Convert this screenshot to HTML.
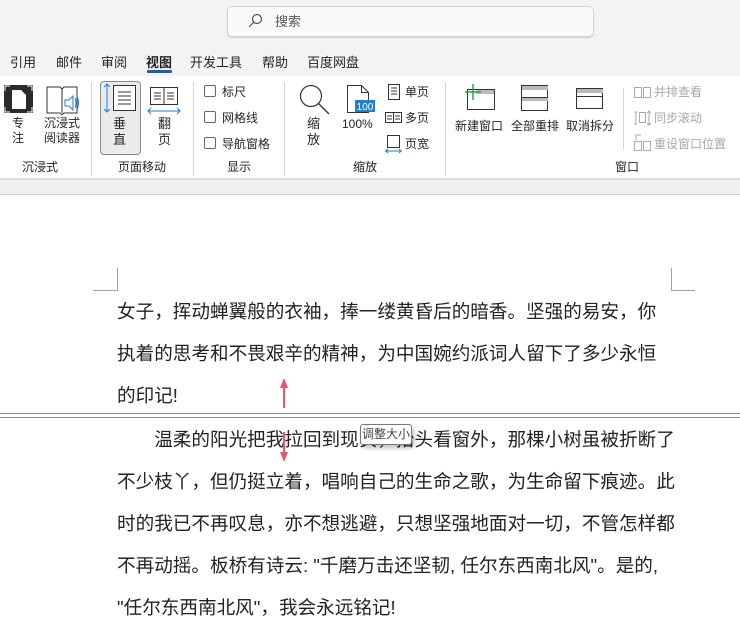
<!DOCTYPE html><html><head><meta charset="utf-8"><style>
*{margin:0;padding:0;box-sizing:border-box}
body{width:740px;height:644px;overflow:hidden;background:#fff;font-family:"Liberation Sans","Noto Sans CJK SC",sans-serif;color:#242424;position:relative}
.a{position:absolute;white-space:nowrap}
.t{font-size:13px}
.s{font-size:12px}
.g{color:#a8a8a8}
.sep{position:absolute;width:1px;background:#d6d6d6;top:82px;height:94px}
.doc{font-size:18.6px;line-height:42px;color:#222}
.cb{position:absolute;width:12px;height:12px;border:1px solid #666;border-radius:2px;left:204px}
</style></head><body>
<div class="a" style="left:0;top:0;width:740px;height:76px;background:#f3f3f3"></div>
<div class="a" style="left:227px;top:6px;width:367px;height:31px;background:#fafafa;border:1px solid #d4d4d4;border-radius:5px;box-shadow:0 1px 1px #ccc"></div>
<svg class="a" style="left:247px;top:13px" width="16" height="16"><circle cx="10" cy="6" r="4.5" fill="none" stroke="#555" stroke-width="1.2"/><line x1="6.8" y1="9.2" x2="2" y2="14" stroke="#555" stroke-width="1.2"/></svg>
<div class="a t" style="left:275px;top:11px;color:#555">搜索</div>
<div class="a t" style="left:10px;top:52px">引用</div>
<div class="a t" style="left:56px;top:52px">邮件</div>
<div class="a t" style="left:101px;top:52px">审阅</div>
<div class="a t" style="left:146px;top:52px;font-weight:bold">视图</div>
<div class="a" style="left:147px;top:70px;width:25px;height:3px;background:#1d5fb4;border-radius:1px"></div>
<div class="a t" style="left:190px;top:52px">开发工具</div>
<div class="a t" style="left:262px;top:52px">帮助</div>
<div class="a t" style="left:307px;top:52px">百度网盘</div>
<div class="a" style="left:0;top:76px;width:740px;height:102px;background:#fff"></div>
<div class="a" style="left:0;top:178px;width:740px;height:2px;background:#dcdcdc"></div>
<div class="a" style="left:0;top:180px;width:740px;height:15px;background:#eff0f0;border-bottom:1px solid #cfcfcf"></div>
<div class="sep" style="left:91px"></div><div class="sep" style="left:193px"></div><div class="sep" style="left:284px"></div><div class="sep" style="left:445px"></div>
<div class="a s" style="left:22px;top:158px">沉浸式</div>
<div class="a s" style="left:118px;top:158px">页面移动</div>
<div class="a s" style="left:227px;top:158px">显示</div>
<div class="a s" style="left:353px;top:158px">缩放</div>
<div class="a s" style="left:615px;top:158px">窗口</div>
<!-- focus -->
<svg class="a" style="left:4px;top:85px" width="29" height="28"><rect width="29" height="28" fill="#2b2b2b"/><path d="M1 6V1h5M23 1h5v5M28 22v5h-5M6 27H1v-5" stroke="#fff" fill="none"/><path d="M8 5h9l5 5v14H8z" fill="#fff"/></svg>
<div class="a s" style="left:12px;top:116px;line-height:15px">专<br>注</div>
<svg class="a" style="left:46px;top:85px" width="34" height="30"><path d="M1 2h13l2 2 2-2h13v26H18l-2 2-2-2H1z" fill="#fff" stroke="#333"/><line x1="16" y1="4" x2="16" y2="28" stroke="#333"/><path d="M19 15h4l4-4v14l-4-4h-4z" fill="#fff" stroke="#1f7fd1"/><path d="M29 13q2 5 0 10M31 11q3 7 0 14" stroke="#1f7fd1" fill="none"/></svg>
<div class="a s" style="left:44px;top:116px;line-height:15px">沉浸式<br>阅读器</div>
<div class="a" style="left:100px;top:81px;width:41px;height:74px;background:#ebebeb;border:1px solid #8a8a8a;border-radius:4px"></div>
<svg class="a" style="left:103px;top:83px" width="36" height="30"><line x1="4" y1="1" x2="4" y2="29" stroke="#1f7fd1"/><path d="M1 4l3-3 3 3M1 26l3 3 3-3" stroke="#1f7fd1" fill="none"/><rect x="10.5" y="2.5" width="22" height="25" fill="#fff" stroke="#333"/><path d="M15 9h13M15 13h13M15 17h13M15 21h13" stroke="#333"/></svg>
<div class="a t" style="left:113px;top:116px;line-height:16px">垂<br>直</div>
<svg class="a" style="left:147px;top:86px" width="34" height="30"><rect x="3.5" y="1.5" width="27" height="17" fill="#fff" stroke="#333"/><line x1="17" y1="1" x2="17" y2="19" stroke="#333"/><path d="M7 7h7M7 10h7M7 13h7M20 7h7M20 10h7M20 13h7" stroke="#333"/><path d="M1 25h32M4 22l-3 3 3 3M30 22l3 3-3 3" stroke="#1f7fd1" fill="none"/></svg>
<div class="a t" style="left:158px;top:116px;line-height:16px">翻<br>页</div>
<div class="cb" style="top:85px"></div><div class="a s" style="left:222px;top:83px">标尺</div>
<div class="cb" style="top:111px"></div><div class="a s" style="left:222px;top:109px">网格线</div>
<div class="cb" style="top:137px"></div><div class="a s" style="left:222px;top:135px">导航窗格</div>
<svg class="a" style="left:299px;top:84px" width="32" height="31"><circle cx="12" cy="12" r="10.5" fill="none" stroke="#333" stroke-width="1.2"/><line x1="19.5" y1="19.5" x2="30" y2="30" stroke="#333" stroke-width="1.3"/></svg>
<div class="a t" style="left:307px;top:116px;line-height:16px">缩<br>放</div>
<svg class="a" style="left:346px;top:84px" width="30" height="30"><path d="M1.5 1.5h14l7 7v20H1.5z" fill="#fff" stroke="#333"/><path d="M15.5 1.5v7h7" fill="none" stroke="#333"/><rect x="9" y="16" width="20" height="12" fill="#1f7fd1"/><text x="19" y="26" font-size="10" fill="#fff" text-anchor="middle" font-family="Liberation Sans">100</text></svg>
<div class="a s" style="left:342px;top:117px">100%</div>
<svg class="a" style="left:386px;top:84px" width="16" height="16"><rect x="2.5" y="0.5" width="11" height="15" fill="none" stroke="#333"/><path d="M5 4h6M5 7h6M5 10h6" stroke="#333"/></svg>
<div class="a s" style="left:405px;top:83px">单页</div>
<svg class="a" style="left:385px;top:110px" width="18" height="16"><rect x="0.5" y="2.5" width="16" height="10" fill="none" stroke="#333"/><line x1="8.5" y1="2" x2="8.5" y2="13" stroke="#333"/><path d="M2 6h5M2 9h5M10 6h5M10 9h5" stroke="#333"/></svg>
<div class="a s" style="left:405px;top:109px">多页</div>
<svg class="a" style="left:385px;top:135px" width="18" height="20"><rect x="2.5" y="0.5" width="12" height="12" fill="none" stroke="#333"/><path d="M0 16h17M3 14l-2 2 2 2M14 14l2 2-2 2" stroke="#1f7fd1" fill="none"/></svg>
<div class="a s" style="left:405px;top:135px">页宽</div>
<svg class="a" style="left:462px;top:83px" width="34" height="28"><rect x="5.5" y="6.5" width="27" height="20" fill="#fff" stroke="#333"/><rect x="14" y="7" width="18" height="4" fill="#bbb"/><path d="M11 1v16M3 9h16" stroke="#2ea04a" stroke-width="1.5"/></svg>
<div class="a s" style="left:455px;top:117px">新建窗口</div>
<svg class="a" style="left:520px;top:84px" width="30" height="28"><rect x="1.5" y="1.5" width="26" height="25" fill="#fff" stroke="#333"/><rect x="2" y="2" width="26" height="4" fill="#bbb"/><line x1="1" y1="13.5" x2="28" y2="13.5" stroke="#333"/><rect x="2" y="14" width="26" height="3" fill="#bbb"/></svg>
<div class="a s" style="left:511px;top:117px">全部重排</div>
<svg class="a" style="left:575px;top:87px" width="30" height="24"><rect x="1.5" y="1.5" width="26" height="20" fill="#fff" stroke="#333"/><rect x="2" y="2" width="26" height="4" fill="#bbb"/><line x1="1" y1="9.5" x2="28" y2="9.5" stroke="#333"/></svg>
<div class="a s" style="left:566px;top:117px">取消拆分</div>
<div class="a" style="left:623px;top:88px;width:1px;height:62px;background:#d6d6d6"></div>
<svg class="a" style="left:634px;top:85px" width="18" height="14"><rect x="0.5" y="2.5" width="7" height="10" fill="none" stroke="#aaa"/><rect x="9.5" y="2.5" width="7" height="10" fill="none" stroke="#aaa"/></svg>
<div class="a s g" style="left:654px;top:83px">并排查看</div>
<svg class="a" style="left:634px;top:110px" width="18" height="16"><path d="M2 2v12M0 2h3M0 14h3" stroke="#aaa" fill="none"/><rect x="5.5" y="2.5" width="6" height="10" fill="none" stroke="#aaa"/><path d="M15 1v14M13 3l2-2 2 2M13 13l2 2 2-2" stroke="#aaa" fill="none"/></svg>
<div class="a s g" style="left:654px;top:109px">同步滚动</div>
<svg class="a" style="left:634px;top:134px" width="18" height="18"><path d="M2 6V1h5" stroke="#aaa" fill="none"/><rect x="0.5" y="7.5" width="7" height="9" fill="none" stroke="#aaa"/><rect x="9.5" y="7.5" width="7" height="9" fill="none" stroke="#aaa"/></svg>
<div class="a s g" style="left:654px;top:135px">重设窗口位置</div>
<!-- document -->
<div class="a" style="left:93px;top:290px;width:24px;height:1px;background:#a0a0a0"></div>
<div class="a" style="left:117px;top:268px;width:1px;height:23px;background:#a0a0a0"></div>
<div class="a" style="left:671px;top:290px;width:24px;height:1px;background:#a0a0a0"></div>
<div class="a" style="left:671px;top:268px;width:1px;height:23px;background:#a0a0a0"></div>
<div class="a doc" style="left:117px;top:291px">女子，挥动蝉翼般的衣袖，捧一缕黄昏后的暗香。坚强的易安，你<br>执着的思考和不畏艰辛的精神，为中国婉约派词人留下了多少永恒<br>的印记!</div>
<div class="a" style="left:0;top:413px;width:740px;height:1px;background:#8f8f8f"></div>
<div class="a" style="left:0;top:417px;width:740px;height:1px;background:#8f8f8f"></div>
<div class="a doc" style="left:117px;top:419px">　　温柔的阳光把我拉回到现实，抬头看窗外，那棵小树虽被折断了<br>不少枝丫，但仍挺立着，唱响自己的生命之歌，为生命留下痕迹。此<br>时的我已不再叹息，亦不想逃避，只想坚强地面对一切，不管怎样都<br>不再动摇。板桥有诗云: "千磨万击还坚韧, 任尔东西南北风"。是的,<br>"任尔东西南北风"，我会永远铭记!</div>
<svg class="a" style="left:277px;top:376px" width="14" height="88"><path d="M7 2l-4 10h3v20h2V12h3z" fill="#f0506a"/><path d="M7 86l-4-10h3V56h2v20h3z" fill="#f0506a"/></svg>
<div class="a" style="left:360px;top:424px;width:52px;height:21px;background:#fff;border:1px solid #777;border-radius:3px;font-size:12px;color:#444;text-align:center;line-height:19px;box-shadow:2px 3px 5px rgba(0,0,0,.25)">调整大小</div>
</body></html>
